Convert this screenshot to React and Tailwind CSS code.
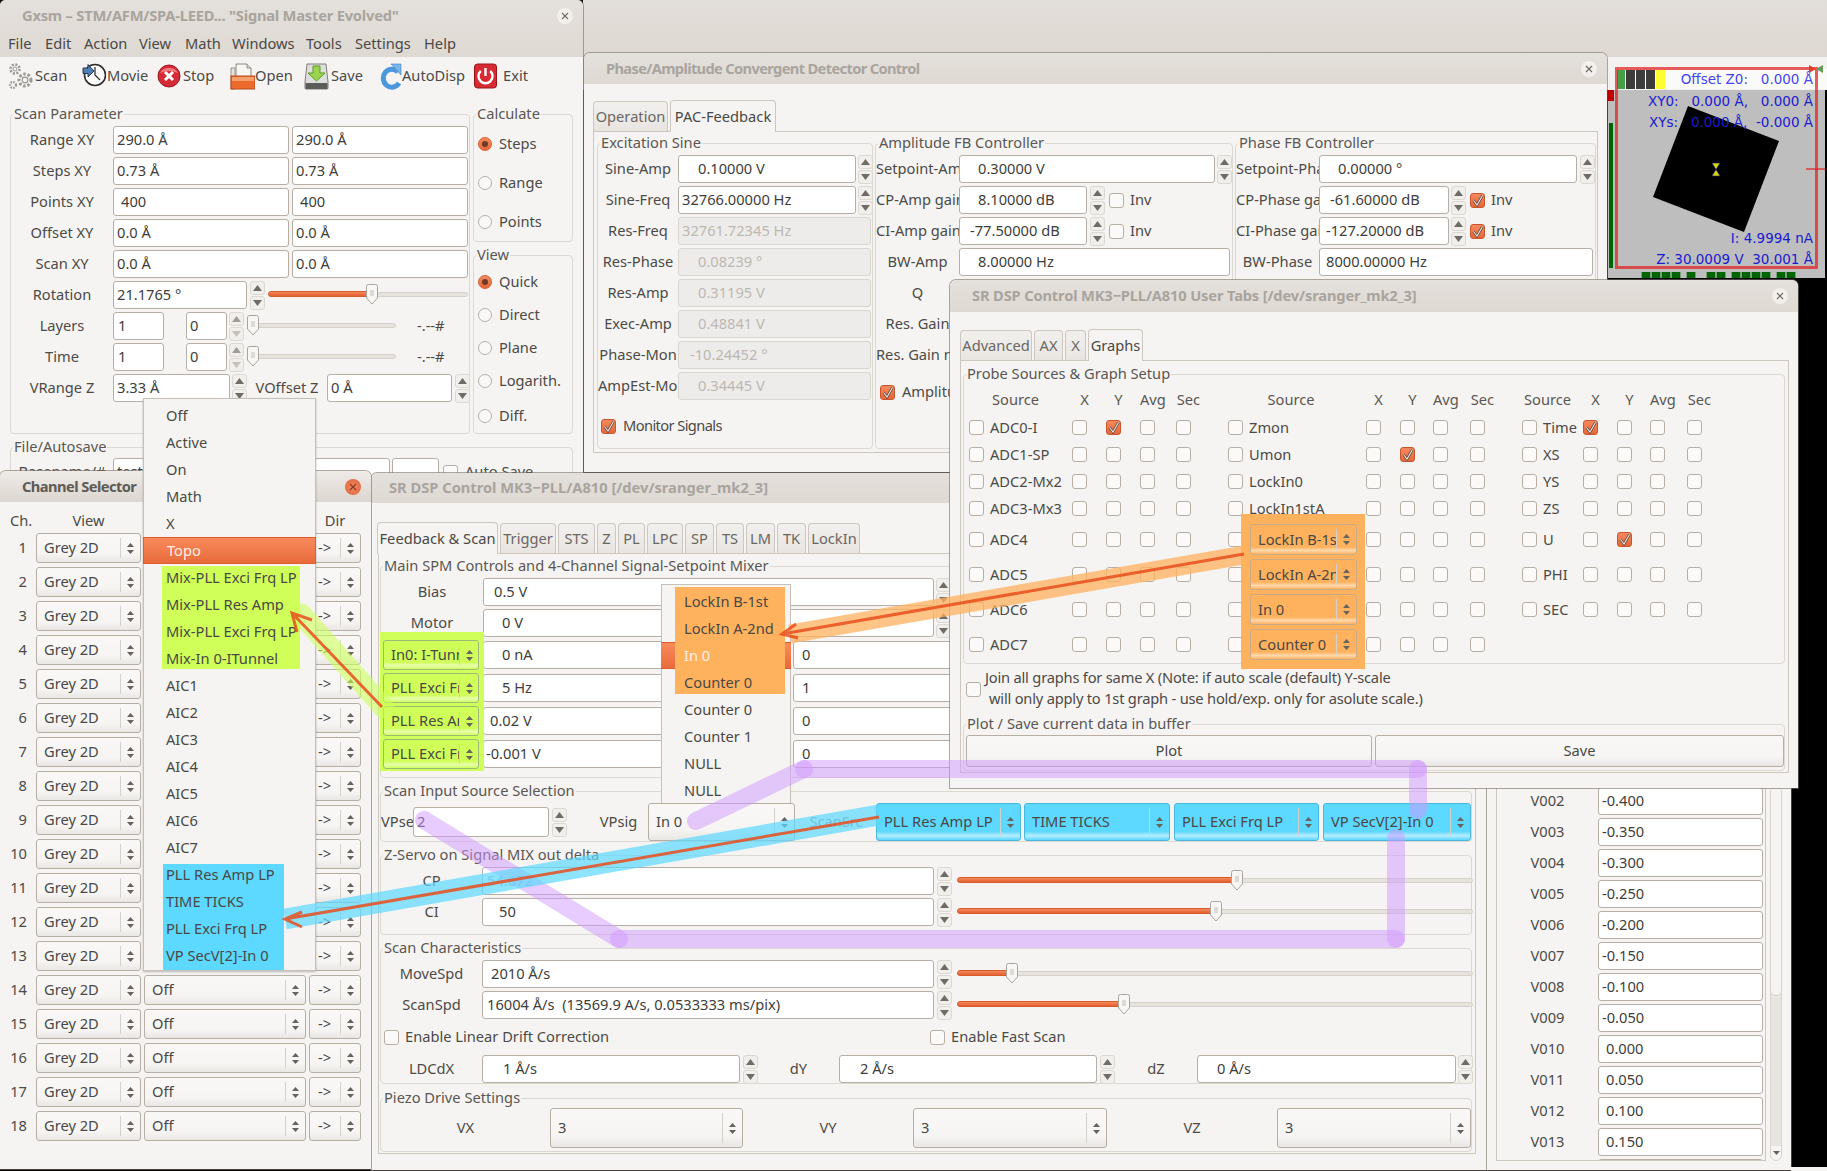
import React from 'react';

const Tri = ({ dir = 'up', c = '#6f6b66' }) => (
  <svg width="9" height="6" viewBox="0 0 9 6"><polygon points={dir === 'up' ? '4.5,0 9,6 0,6' : '0,0 9,0 4.5,6'} fill={c} /></svg>
);

const Spin = ({ className = '', dim }) => (
  <div className={`flex flex-col gap-[1px] w-[15px] shrink-0 ${className}`}>
    {['up', 'down'].map((d) => (
      <div key={d} className="h-[14px] rounded-[3px] border border-[#dcd8d2] bg-[#f1efec] flex items-center justify-center">
        <Tri dir={d} c={dim && d === 'down' ? '#c4c0ba' : dim ? '#a09c96' : '#6f6b66'} />
      </div>
    ))}
  </div>
);

const Inp = ({ v, className = '' }) => (
  <div className={`h-[28px] pb-[2px] shrink-0 flex items-center rounded-[3px] border border-[#b7afa6] bg-white text-[#403e3b] whitespace-nowrap overflow-hidden ${className}`}>{v}</div>
);

const Dis = ({ v, className = '' }) => (
  <div className={`h-[28px] pb-[2px] shrink-0 flex items-center rounded-[3px] border border-[#dad6d0] bg-[#eeecea] text-[#bcb8b2] whitespace-nowrap overflow-hidden ${className}`}>{v}</div>
);

const TONES = {
  plain: 'border-[#b7afa6] bg-[linear-gradient(180deg,#f9f8f7_0%,#f6f5f3_70%,#e9e7e4_100%)]',
  lime: 'border-[#9fb87a] bg-[linear-gradient(180deg,#d0ff5a_0%,#d0ff5a_76%,#e6ffb0_88%,#d0ff5a_100%)]',
  orange: 'border-[#c9ab8a] bg-[linear-gradient(180deg,#ffb25e_0%,#ffb25e_76%,#ffd9ac_88%,#ffb25e_100%)]',
  blue: 'border-[#49b8df] bg-[linear-gradient(180deg,#5dd8ff_0%,#5dd8ff_76%,#b4eeff_88%,#5dd8ff_100%)]',
};

const Combo = ({ t, className = '', tone = 'plain', pad = 'pl-[7px]', arrow = 'w-[19px]' }) => (
  <div className={`flex items-center shrink-0 rounded-[3px] border text-[#4a4845] ${TONES[tone]} ${className}`}>
    <span className={`flex-1 min-w-0 overflow-hidden whitespace-nowrap pb-[2px] ${pad}`}>{t}</span>
    <span className="w-px self-stretch my-[4px] bg-[#d4d0ca]" />
    <span className={`flex flex-col items-center gap-[3px] ${arrow}`}>
      <svg width="7" height="4" viewBox="0 0 7 4"><polygon points="3.5,0 7,4 0,4" fill="#66625d" /></svg>
      <svg width="7" height="4" viewBox="0 0 7 4"><polygon points="0,0 7,0 3.5,4" fill="#66625d" /></svg>
    </span>
  </div>
);

const Lbl = ({ t, className = '', start }) => (
  <div className={`shrink-0 flex items-center pb-[2px] overflow-hidden whitespace-nowrap text-[#4c4a47] ${start ? 'justify-start' : 'justify-center'} ${className}`}>{t}</div>
);

const Frame = ({ label, className = '', children }) => (
  <fieldset className={`min-w-0 shrink-0 border border-[#dcd8d2] rounded-[4px] ${className}`}>
    <legend className="ml-[2px] px-[1px] h-[20px] leading-[19px] text-[#5a5753] whitespace-nowrap">{label}</legend>
    {children}
  </fieldset>
);

const Chk = ({ on, className = '' }) => (
  <span className={`inline-flex w-[15px] h-[15px] shrink-0 rounded-[3px] border items-center justify-center ${on ? 'border-[#c8552b] bg-[linear-gradient(180deg,#f58a5e,#e5673a)]' : 'border-[#b7afa6] bg-[#fbfaf9]'} ${className}`}>
    {on && (
      <svg width="13" height="13" viewBox="0 0 13 13">
        <path d="M2.5 6.5 L6 11 L11.5 1.5" fill="none" stroke="#5a4a42" strokeWidth="2.6" />
        <path d="M2.5 6.5 L6 11 L11.5 1.5" fill="none" stroke="#f7e7df" strokeWidth="1.1" />
      </svg>
    )}
  </span>
);

const Radio = ({ on, t, className = '' }) => (
  <div className={`flex items-center pl-[4px] gap-[7px] text-[#4c4a47] ${className}`}>
    <span className={`w-[14px] h-[14px] rounded-full border flex items-center justify-center ${on ? 'border-[#d8602f] bg-[linear-gradient(180deg,#f58a5e,#e5673a)]' : 'border-[#b7afa6] bg-[#f9f8f7]'}`}>
      {on && <span className="w-[6px] h-[6px] rounded-full bg-[#6e3a22]" />}
    </span>
    <span className="pb-[2px]">{t}</span>
  </div>
);

const Slider = ({ className = '', pos, fill = true }) => (
  <div className={`relative h-[20px] mb-[2px] shrink-0 flex items-center ${className}`}>
    <div className="w-full h-[5px] rounded-[3px] bg-[#e6e3de] border border-[#d6d1ca]" />
    {fill && <div className="absolute left-0 top-[7px] h-[6px] rounded-[3px] bg-[linear-gradient(180deg,#f58a5e,#e2602f)] border border-[#d95b2a]" style={{ width: pos }} />}
    <svg className="absolute top-0" style={{ left: pos - 6 }} width="12" height="21" viewBox="0 0 12 21">
      <path d="M2.5 0.5 H9.5 Q11.5 0.5 11.5 2.5 V14 L6 20 L0.5 14 V2.5 Q0.5 0.5 2.5 0.5 Z" fill="#f7f6f4" stroke="#aaa49c" />
      <path d="M4 7 H8 M4 9 H8 M4 11 H8" stroke="#c2bdb6" />
    </svg>
  </div>
);

const Close = ({ active }) => (
  <span className={`w-[16px] h-[16px] rounded-full flex items-center justify-center ${active ? 'bg-[radial-gradient(circle,#f08a62,#e0613a)]' : 'bg-[#f2efec]'}`}>
    <svg width="8" height="8" viewBox="0 0 8 8"><path d="M1 1 L7 7 M7 1 L1 7" stroke={active ? '#8a3a20' : '#6c6862'} strokeWidth="1.1" /></svg>
  </span>
);

const Win = ({ title, className = '', active, pl = 'pl-[22px]', bar, children, titleH = 'h-[31px]', tr = '' }) => (
  <div className={`absolute isolate flex flex-col rounded-t-[6px] bg-[#f5f4f2] shadow-[0_0_0_1px_rgba(120,110,100,0.6)] ${className}`}>
    <div className={`shrink-0 rounded-t-[6px] ${active ? 'bg-[linear-gradient(180deg,#efebe7,#dcd6d0)]' : 'bg-[linear-gradient(180deg,#e4e0db,#dfd9d3)]'}`}>
      <div className={`flex items-center justify-between pr-[10px] ${pl} ${titleH}`}>
        <span className={`font-bold whitespace-nowrap pb-[2px] ${tr} ${active ? 'text-[#5e5a55]' : 'text-[#a9a49e]'}`}>{title}</span>
        <Close active={active} />
      </div>
      {bar}
    </div>
    {children}
  </div>
);

const Tab = ({ t, className = '', active }) => (
  <div className={`flex items-center justify-center pb-[2px] whitespace-nowrap rounded-t-[4px] border border-b-0 border-[#cdc7bf] shrink-0 ${active ? 'h-[32px] bg-[#f5f4f2] text-[#4a4845] -mb-px relative' : 'h-[30px] bg-[linear-gradient(180deg,#f2f0ee,#e8e5e1)] text-[#6a6762]'} ${className}`}>{t}</div>
);

const MENU = [['File', 'w-[37px]'], ['Edit', 'w-[39px]'], ['Action', 'w-[55px]'], ['View', 'w-[46px]'], ['Math', 'w-[47px]'], ['Windows', 'w-[74px]'], ['Tools', 'w-[49px]'], ['Settings', 'w-[69px]'], ['Help', 'w-[40px]']];

const Gear = () => (
  <svg width="26" height="28" viewBox="0 0 26 28">
    <g fill="none" stroke="#9b9a95">
      <circle cx="7" cy="7" r="4.5" strokeWidth="2.6" strokeDasharray="2 1.5" />
      <circle cx="7" cy="7" r="2" strokeWidth="1" />
      <circle cx="17" cy="18" r="6" strokeWidth="3" strokeDasharray="2.5 1.8" />
      <circle cx="17" cy="18" r="2.8" strokeWidth="1.2" />
      <circle cx="5" cy="23" r="3" strokeWidth="2.2" strokeDasharray="1.6 1.2" />
    </g>
  </svg>
);
const Clock = () => (
  <svg width="24" height="28" viewBox="0 0 24 28">
    <circle cx="13" cy="13" r="10.5" fill="#fdfdfd" stroke="#2b2b2b" strokeWidth="1.6" />
    <path d="M13 5 V13 L18 18" fill="none" stroke="#333" strokeWidth="1.3" />
    <path d="M1 6 H6 V2.5 L12 9 L6 15 V11.5 H1 Z" fill="#4f7fb8" stroke="#1f2a44" strokeWidth="0.9" />
  </svg>
);
const StopI = () => (
  <svg width="24" height="26" viewBox="0 0 24 26">
    <circle cx="12" cy="13" r="11" fill="#d52b36" stroke="#9c1622" />
    <path d="M3 10 A10 9 0 0 1 21 10 Q12 6 3 10Z" fill="#ee7d80" />
    <path d="M8 9 L16 17 M16 9 L8 17" stroke="#fff" strokeWidth="3" />
  </svg>
);
const OpenI = () => (
  <svg width="25" height="27" viewBox="0 0 25 27">
    <path d="M6 1 H17 L21 5 V14 H6 Z" fill="#f6f5f2" stroke="#8a8a86" />
    <path d="M17 1 V5 H21" fill="#ddd" stroke="#8a8a86" />
    <path d="M1 5 H5 V26 H1 Z" fill="#e7e3dc" stroke="#9a968e" />
    <rect x="1" y="13" width="24" height="13" fill="#ec6a2c" stroke="#b84d1b" />
    <rect x="2" y="14" width="22" height="4" fill="#f5a06c" />
  </svg>
);
const SaveI = () => (
  <svg width="25" height="27" viewBox="0 0 25 27">
    <path d="M3 1 H22 L24 19 V25 Q24 26 23 26 H2 Q1 26 1 25 V19 Z" fill="#dedede" stroke="#7e7e7a" />
    <rect x="1.5" y="20" width="22" height="6" fill="#5c5c58" />
    <path d="M9 3 H16 V10 H21 L12.5 18 L4 10 H9 Z" fill="#9bd44e" stroke="#5e9a22" />
  </svg>
);
const AutoI = () => (
  <svg width="22" height="27" viewBox="0 0 22 27">
    <path d="M18 9 A8.5 9 0 1 0 19 20" fill="none" stroke="#4d97dc" strokeWidth="5" />
    <path d="M11 1 L21 1 L21 12 Z" fill="#7ab6ea" stroke="#3f82c2" strokeWidth="0.6" />
  </svg>
);
const ExitI = () => (
  <svg width="23" height="26" viewBox="0 0 23 26">
    <rect x="0.5" y="1" width="22" height="24" rx="3" fill="#d82a33" stroke="#9a141c" />
    <path d="M6.8 8 A7 7 0 1 0 16.2 8" fill="none" stroke="#fff" strokeWidth="2.4" />
    <path d="M11.5 5 V13" stroke="#fff" strokeWidth="2.4" />
  </svg>
);

const TOOLS = [
  ['Scan', <Gear />, 'w-[74px]', 'w-[27px]'],
  ['Movie', <Clock />, 'w-[75px]', 'w-[25px]'],
  ['Stop', <StopI />, 'w-[73px]', 'w-[26px]'],
  ['Open', <OpenI />, 'w-[74px]', 'w-[25px]'],
  ['Save', <SaveI />, 'w-[76px]', 'w-[27px]'],
  ['AutoDisp', <AutoI />, 'w-[94px]', 'w-[22px]'],
  ['Exit', <ExitI />, 'w-[60px]', 'w-[29px]'],
];

const XY = [
  ['Range XY', '290.0 Å', 'pl-[3px]'],
  ['Steps XY', '0.73 Å', 'pl-[3px]'],
  ['Points XY', '400', 'pl-[7px]'],
  ['Offset XY', '0.0 Å', 'pl-[3px]'],
  ['Scan XY', '0.0 Å', 'pl-[3px]'],
];

const Gxsm = () => (
  <Win
    title={'Gxsm – STM/AFM/SPA-LEED... "Signal Master Evolved"'}
    tr="tracking-[-0.2px]"
    className="left-0 top-0 w-[583px] h-[500px]"
    bar={
      <div className="flex items-center h-[26px] pl-[8px] pb-[2px] text-[#4a4845]">
        {MENU.map(([m, w]) => <span key={m} className={w}>{m}</span>)}
      </div>
    }
  >
    <div className="flex items-center h-[38px] pl-[8px] text-[#4c4a47]">
      {TOOLS.map(([t, ic, w, iw]) => (
        <div key={t} className={`flex items-center shrink-0 ${w}`}>
          <span className={`flex shrink-0 ${iw}`}>{ic}</span><span className="pb-[2px]">{t}</span>
        </div>
      ))}
    </div>
    <div className="flex flex-col px-[10px] pt-[9px]">
      <div className="flex gap-[3px]">
        <Frame label="Scan Parameter" className="w-[460px] h-[330px]">
          <div className="flex flex-col gap-[3px] pt-[2px]">
            {XY.map(([l, v, p]) => (
              <div key={l} className="flex items-center">
                <Lbl t={l} className="w-[102px] h-[28px]" />
                <Inp v={v} className={`w-[176px] ${p}`} />
                <Inp v={v} className={`w-[176px] ml-[3px] ${p}`} />
              </div>
            ))}
            <div className="flex items-center h-[28px]">
              <Lbl t="Rotation" className="w-[102px] h-[28px]" />
              <Inp v="21.1765 °" className="w-[134px] pl-[3px]" />
              <Spin className="ml-[3px]" />
              <Slider className="w-[200px] ml-[3px]" pos={104} />
            </div>
            {['Layers', 'Time'].map((l) => (
              <div key={l} className="flex items-center h-[28px]">
                <Lbl t={l} className="w-[102px] h-[28px]" />
                <Inp v="1" className="w-[51px] pl-[4px]" />
                <Inp v="0" className="w-[41px] ml-[22px] pl-[3px]" />
                <Spin className="ml-[2px]" dim />
                <Slider className="w-[148px] ml-[4px]" pos={5} fill={false} />
                <span className="ml-[21px] pb-[2px] text-[#4c4a47]">-.--#</span>
              </div>
            ))}
            <div className="flex items-center h-[28px]">
              <Lbl t="VRange Z" className="w-[102px] h-[28px]" />
              <Inp v="3.33 Å" className="w-[117px] pl-[3px]" />
              <Spin className="ml-[2px]" />
              <Lbl t="VOffset Z" className="w-[80px] h-[28px]" />
              <Inp v="0 Å" className="w-[125px] pl-[3px]" />
              <Spin className="ml-[3px]" />
            </div>
          </div>
        </Frame>
        <div className="flex flex-col gap-[3px] w-[100px]">
          <Frame label="Calculate" className="w-[100px] h-[138px]">
            <Radio on t="Steps" className="h-[39px]" />
            <Radio t="Range" className="h-[39px]" />
            <Radio t="Points" className="h-[39px]" />
          </Frame>
          <Frame label="View" className="w-[100px] h-[189px]">
            <Radio on t="Quick" className="h-[33px]" />
            <Radio t="Direct" className="h-[33px]" />
            <Radio t="Plane" className="h-[33px]" />
            <Radio t="Logarith." className="h-[33px]" />
            <Radio t="Diff." className="h-[34px] mt-[2px]" />
          </Frame>
        </div>
      </div>
      <Frame label="File/Autosave" className="w-[563px] h-[60px] mt-[3px]">
        <div className="flex items-center pt-[1px]">
          <Lbl t="Basename/#" className="w-[102px] h-[28px]" />
          <Inp v="test" className="w-[277px] pl-[3px]" />
          <Inp v="" className="w-[47px] ml-[2px]" />
          <Chk className="ml-[4px]" />
          <span className="ml-[7px] pb-[2px] text-[#4c4a47]">Auto Save</span>
        </div>
      </Frame>
    </div>
  </Win>
);

const Row = ({ className = '', children }) => <div className={`flex items-center h-[28px] ${className}`}>{children}</div>;

const Phase = () => (
  <Win title="Phase/Amplitude Convergent Detector Control" tr="tracking-[-0.65px]" className="left-[584px] top-[53px] w-[1023px] h-[419px]">
    <div className="flex items-end gap-[2px] pl-[9px] pt-[16px]">
      <Tab t="Operation" className="w-[75px]" />
      <Tab t="PAC-Feedback" active className="w-[106px]" />
    </div>
    <div className="ml-[9px] w-[1005px] h-[322px] border border-[#cdc7bf] flex gap-[2px] pl-[3px] pt-[1px]">
      <Frame label="Excitation Sine" className="w-[276px] h-[316px]">
        <div className="flex flex-col gap-[3px] pt-[2px]">
          <Row><Lbl t="Sine-Amp" className="w-[80px] h-[28px]" /><Inp v="0.10000 V" className="w-[178px] pl-[19px]" /><Spin className="ml-[2px]" /></Row>
          <Row><Lbl t="Sine-Freq" className="w-[80px] h-[28px]" /><Inp v="32766.00000 Hz" className="w-[178px] pl-[3px]" /><Spin className="ml-[2px]" /></Row>
          {[['Res-Freq', '32761.72345 Hz', 'pl-[3px]'], ['Res-Phase', '0.08239 °', 'pl-[19px]'], ['Res-Amp', '0.31195 V', 'pl-[19px]'], ['Exec-Amp', '0.48841 V', 'pl-[19px]'], ['Phase-Mon', '-10.24452 °', 'pl-[11px]'], ['AmpEst-Mon', '0.34445 V', 'pl-[19px]']].map(([l, v, p]) => (
            <Row key={l}><Lbl t={l} className="w-[80px] h-[28px]" start={l === 'AmpEst-Mon'} /><Dis v={v} className={`w-[193px] ${p}`} /></Row>
          ))}
          <div className="flex items-center gap-[7px] h-[20px] mt-[13px] pl-[3px] text-[#4c4a47]"><Chk on /><span className="pb-[2px] tracking-[-0.6px]">Monitor Signals</span></div>
        </div>
      </Frame>
      <Frame label="Amplitude FB Controller" className="w-[358px] h-[316px]">
        <div className="flex flex-col gap-[3px] pt-[2px]">
          <Row><Lbl t="Setpoint-Amp" start className="w-[83px] h-[28px]" /><Inp v="0.30000 V" className="w-[256px] pl-[18px]" /><Spin className="ml-[2px]" /></Row>
          <Row><Lbl t="CP-Amp gain" start className="w-[83px] h-[28px]" /><Inp v="8.10000 dB" className="w-[128px] pl-[18px]" /><Spin className="ml-[3px]" /><Chk className="ml-[4px]" /><span className="ml-[6px] pb-[2px] text-[#4c4a47]">Inv</span></Row>
          <Row><Lbl t="CI-Amp gain" start className="w-[83px] h-[28px]" /><Inp v="-77.50000 dB" className="w-[128px] pl-[10px]" /><Spin className="ml-[3px]" /><Chk className="ml-[4px]" /><span className="ml-[6px] pb-[2px] text-[#4c4a47]">Inv</span></Row>
          <Row><Lbl t="BW-Amp" className="w-[83px] h-[28px]" /><Inp v="8.00000 Hz" className="w-[271px] pl-[18px]" /></Row>
          <Row><Lbl t="Q" className="w-[83px] h-[28px]" /></Row>
          <Row><Lbl t="Res. Gain" className="w-[83px] h-[28px]" /></Row>
          <Row><Lbl t="Res. Gain n" start className="w-[83px] h-[28px]" /></Row>
          <div className="flex items-center gap-[7px] h-[20px] mt-[10px] pl-[4px] text-[#4c4a47]"><Chk on /><span className="pb-[2px]">Amplitude</span></div>
        </div>
      </Frame>
      <Frame label="Phase FB Controller" className="w-[361px] h-[316px]">
        <div className="flex flex-col gap-[3px] pt-[2px]">
          <Row><Lbl t="Setpoint-Phase" start className="w-[83px] h-[28px]" /><Inp v="0.00000 °" className="w-[258px] pl-[18px]" /><Spin className="ml-[3px]" /></Row>
          <Row><Lbl t="CP-Phase gain" start className="w-[83px] h-[28px]" /><Inp v="-61.60000 dB" className="w-[130px] pl-[10px]" /><Spin className="ml-[2px]" /><Chk on className="ml-[4px]" /><span className="ml-[6px] pb-[2px] text-[#4c4a47]">Inv</span></Row>
          <Row><Lbl t="CI-Phase gain" start className="w-[83px] h-[28px]" /><Inp v="-127.20000 dB" className="w-[130px] pl-[6px]" /><Spin className="ml-[2px]" /><Chk on className="ml-[4px]" /><span className="ml-[6px] pb-[2px] text-[#4c4a47]">Inv</span></Row>
          <Row><Lbl t="BW-Phase" className="w-[83px] h-[28px]" /><Inp v="8000.00000 Hz" className="w-[274px] pl-[6px]" /></Row>
        </div>
      </Frame>
    </div>
  </Win>
);

const ImageWin = () => {
  const leds = [305, 335, 365, 395, 440, 500, 530, 575, 605, 635, 665, 710, 740];
  return (
    <div className="absolute left-[583px] top-0 w-[1244px] h-[290px] flex flex-col bg-black">
      <div className="h-[57px] shrink-0 bg-[linear-gradient(180deg,#e2ded9,#dfd8d2)]" />
      <div className="h-[33px] shrink-0 bg-[#f3f2f0] pt-[12px]">
        <div className="ml-[1034px] h-[20px] flex items-center bg-[#fafaf9] pr-[14px]">
          <span className="w-[8px] h-[19px] bg-[#43a047]" />
          <span className="w-[9px] h-[19px] ml-[1px] bg-[#3c3c3c]" />
          <span className="w-[9px] h-[19px] ml-[1px] bg-[#3c3c3c]" />
          <span className="w-[9px] h-[19px] ml-[1px] bg-[#3c3c3c]" />
          <span className="w-[9px] h-[19px] ml-[1px] bg-[#ffff33]" />
          <span className="flex-1 text-right whitespace-pre text-[#4444ee] text-[13.5px] font-['DejaVu_Sans',sans-serif]">Offset Z0:   0.000 Å</span>
        </div>
      </div>
      <div className="relative ml-[1025px] w-[217px] h-[188px] shrink-0 bg-[#bebebe] flex flex-col justify-between items-end pr-[12px] pt-[1px] pb-[8px] text-[#1a1ad0] text-[13.5px] font-['DejaVu_Sans',sans-serif]">
        <svg className="absolute left-0 top-0" width="217" height="188" viewBox="0 0 217 188">
          <rect x="0" y="0" width="6" height="11" fill="#c00000" />
          <rect x="1" y="33" width="4" height="145" fill="#006400" />
          {leds.map((x) => <rect key={x} x={x / 3 - 68} y="182" width="8.7" height="6" fill="#006400" />)}
          <polygon points="80,16 171,51 136,142 45,107" fill="#000" />
          <polygon points="104,73 112,73 108,79.5 112,86 104,86 108,79.5" fill="#d8d800" stroke="#2020a0" strokeWidth="0.6" />
        </svg>
        <div className="relative flex flex-col items-end whitespace-pre leading-[21px]">
          <span>XY0:   0.000 Å,   0.000 Å</span>
          <span>XYs:   0.000 Å,  -0.000 Å</span>
        </div>
        <div className="relative flex flex-col items-end whitespace-pre leading-[21px]">
          <span>I: 4.9994 nA</span>
          <span>Z: 30.0009 V  30.001 Å</span>
        </div>
      </div>
    </div>
  );
};

const TABS = [['Trigger', 'w-[56px]'], ['STS', 'w-[37px]'], ['Z', 'w-[19px]'], ['PL', 'w-[27px]'], ['LPC', 'w-[36px]'], ['SP', 'w-[29px]'], ['TS', 'w-[28px]'], ['LM', 'w-[29px]'], ['TK', 'w-[29px]'], ['LockIn', 'w-[52px]']];

const MIX = [
  ['In0: I-Tunnel', '0 nA', 'pl-[18px]', '0'],
  ['PLL Exci Frq', '5 Hz', 'pl-[18px]', '1'],
  ['PLL Res Amp', '0.02 V', 'pl-[6px]', '0'],
  ['PLL Exci Frq', '-0.001 V', 'pl-[2px]', '0'],
];

const SrDsp = () => (
  <Win title="SR DSP Control MK3−PLL/A810 [/dev/sranger_mk2_3]" pl="pl-[18px]" className="left-[371px] top-[473px] w-[1116px] h-[697px]" titleH="h-[30px]">
    <div className="absolute left-[9px] top-[159px] w-[104px] h-[139px] bg-[#d0ff5a] z-[1]" />
    <div className="flex items-end gap-[2px] pl-[6px] pt-[19px]">
      <Tab t="Feedback & Scan" active className="w-[121px]" />
      {TABS.map(([t, w]) => <Tab key={t} t={t} className={w} />)}
    </div>
    <div className="ml-[7px] w-[1098px] h-[601px] border border-[#cdc7bf] flex flex-col pl-[1px] pt-[2px]">
      <Frame label="Main SPM Controls and 4-Channel Signal-Setpoint Mixer" className="w-[1092px] h-[222px]">
        <div className="flex flex-col pt-[2px]">
          <Row><Lbl t="Bias" className="w-[102px] h-[28px]" /><Inp v="0.5 V" className="w-[451px] pl-[10px]" /><Spin className="ml-[2px]" /></Row>
          <Row className="mt-[3px]"><Lbl t="Motor" className="w-[102px] h-[28px]" /><Inp v="0 V" className="w-[451px] pl-[18px]" /><Spin className="ml-[2px]" /></Row>
          <div className="flex flex-col gap-[5px] mt-[4px]">
            {MIX.map(([c, v, p, r], i) => (
              <Row key={i}>
                <Combo t={c} tone="lime" className="w-[96px] h-[30px] ml-[2px] relative z-[2]" arrow="w-[18px]" />
                <Inp v={v} className={`w-[200px] ml-[4px] ${p}`} />
                <Inp v={r} className="w-[200px] ml-[110px] pl-[8px]" />
              </Row>
            ))}
          </div>
        </div>
      </Frame>
      <Frame label="Scan Input Source Selection" className="w-[1092px] h-[61px] mt-[3px]">
        <div className="flex items-center h-[38px] pt-0 mt-[2px]">
          <Lbl t="VPse" start className="w-[32px] h-[28px]" />
          <Inp v="2" className="w-[136px] !h-[30px] pl-[3px] " />
          <Spin className="ml-[3px]" />
          <Lbl t="VPsig" className="w-[59px] h-[28px] ml-[22px]" />
          <Combo t="In 0" className="w-[147px] h-[38px]" />
          <Lbl t="ScanSrc" className="w-[80px] h-[28px] ml-[1px] opacity-60" />
          <Combo t="PLL Res Amp LP" tone="blue" className="w-[145px] h-[38px]" />
          <Combo t="TIME TICKS" tone="blue" className="w-[146px] h-[38px] ml-[3px]" />
          <Combo t="PLL Exci Frq LP" tone="blue" className="w-[145px] h-[38px] ml-[4px]" />
          <Combo t="VP SecV[2]-In 0" tone="blue" className="w-[148px] h-[38px] ml-[4px]" />
        </div>
      </Frame>
      <Frame label="Z-Servo  on Signal MIX out delta" className="w-[1092px] h-[90px] mt-[3px]">
        <div className="flex flex-col gap-[3px] pt-[2px]">
          <Row><Lbl t="CP" className="w-[101px] h-[28px]" /><Inp v="54.672" className="w-[452px] pl-[4px] !text-[#9ab4c0]" /><Spin className="ml-[3px]" /><Slider className="w-[516px] ml-[5px]" pos={280} /></Row>
          <Row><Lbl t="CI" className="w-[101px] h-[28px]" /><Inp v="50" className="w-[452px] pl-[16px]" /><Spin className="ml-[3px]" /><Slider className="w-[516px] ml-[5px]" pos={259} /></Row>
        </div>
      </Frame>
      <Frame label="Scan Characteristics" className="w-[1092px] h-[146px] mt-[3px]">
        <div className="flex flex-col pt-[2px]">
          <Row><Lbl t="MoveSpd" className="w-[101px] h-[28px]" /><Inp v="2010 Å/s" className="w-[452px] pl-[8px]" /><Spin className="ml-[3px]" /><Slider className="w-[516px] ml-[5px]" pos={55} /></Row>
          <Row className="mt-[3px]"><Lbl t="ScanSpd" className="w-[101px] h-[28px]" /><Inp v="16004 Å/s  (13569.9 A/s, 0.0533333 ms/pix)" className="w-[452px] pl-[4px] whitespace-pre" /><Spin className="ml-[3px]" /><Slider className="w-[516px] ml-[5px]" pos={167} /></Row>
          <div className="flex items-center h-[20px] mt-[8px] text-[#4c4a47]">
            <div className="flex items-center gap-[6px] w-[549px] pl-[3px]"><Chk /><span className="pb-[2px]">Enable Linear Drift Correction</span></div>
            <div className="flex items-center gap-[6px]"><Chk /><span className="pb-[2px]">Enable Fast Scan</span></div>
          </div>
          <Row className="mt-[8px]">
            <Lbl t="LDCdX" className="w-[101px] h-[28px]" />
            <Inp v="1 Å/s" className="w-[258px] pl-[20px]" /><Spin className="ml-[3px]" />
            <Lbl t="dY" className="w-[81px] h-[28px]" />
            <Inp v="2 Å/s" className="w-[258px] pl-[20px]" /><Spin className="ml-[3px]" />
            <Lbl t="dZ" className="w-[82px] h-[28px]" />
            <Inp v="0 Å/s" className="w-[259px] pl-[19px]" /><Spin className="ml-[2px]" />
          </Row>
        </div>
      </Frame>
      <Frame label="Piezo Drive Settings" className="w-[1092px] h-[64px] mt-[4px]">
        <div className="flex items-center h-[40px]">
          <Lbl t="VX" className="w-[169px] h-[28px]" /><Combo t="3" className="w-[193px] h-[40px]" />
          <Lbl t="VY" className="w-[170px] h-[28px]" /><Combo t="3" className="w-[194px] h-[40px]" />
          <Lbl t="VZ" className="w-[170px] h-[28px]" /><Combo t="3" className="w-[194px] h-[40px]" />
        </div>
      </Frame>
    </div>
  </Win>
);

const VWin = () => {
  const rows = Array.from({ length: 13 }, (_, k) => {
    const i = k + 2;
    const val = (-0.5 + i * 0.05).toFixed(3);
    return ['V' + String(i).padStart(3, '0'), val];
  });
  return (
    <div className="absolute isolate left-[1487px] top-[780px] w-[304px] h-[390px] flex bg-[#f5f4f2] shadow-[0_0_0_1px_rgba(120,110,100,0.6)] pl-[9px] pt-[6px]">
      <div className="w-[270px] h-[375px] border border-[#cdc7bf] overflow-hidden flex flex-col gap-[3px] shrink-0">
        {rows.map(([l, v]) => (
          <Row key={l} className="shrink-0">
            <Lbl t={l} className="w-[101px] h-[28px]" />
            <Inp v={v} className={`w-[165px] ${v[0] === '-' ? 'pl-[3px]' : 'pl-[7px]'}`} />
          </Row>
        ))}
      </div>
      <div className="ml-[4px] w-[12px] h-[375px] rounded-[6px] border border-[#d8d4ce] bg-[#e8e5e1] flex flex-col justify-between overflow-hidden">
        <div className="h-[209px] rounded-b-[6px] bg-[#f5f4f2] border-b border-[#d0ccc5]" />
        <div className="h-[14px] bg-[#f5f4f2] flex items-center justify-center"><svg width="7" height="4" viewBox="0 0 7 4"><polygon points="0,0 7,0 3.5,4" fill="#66625d" /></svg></div>
      </div>
    </div>
  );
};

const HCell = ({ t }) => <span className="w-[25px] text-center text-[#5a5753] pb-[2px]">{t}</span>;
const G = [
  ['ADC0-I', 'Zmon', 'Time', [1], [], [0]],
  ['ADC1-SP', 'Umon', 'XS', [], [1], []],
  ['ADC2-Mx2', 'LockIn0', 'YS', [], [], []],
  ['ADC3-Mx3', 'LockIn1stA', 'ZS', [], [], []],
  ['ADC4', null, 'U', [], [], [1]],
  ['ADC5', null, 'PHI', [], [], []],
  ['ADC6', null, 'SEC', [], [], []],
  ['ADC7', null, null, [], [], []],
];
const COMBOS = ['LockIn B-1st', 'LockIn A-2nd', 'In 0', 'Counter 0'];

const Cells = ({ on = [] }) => [0, 1, 2, 3].map((i) => (
  <div key={i} className="flex items-center"><Chk on={on.includes(i)} /></div>
));

const UserTabs = () => {
  let ci = 0;
  return (
    <Win title="SR DSP Control MK3−PLL/A810 User Tabs [/dev/sranger_mk2_3]" tr="tracking-[-0.15px]" className="left-[950px] top-[280px] w-[848px] h-[508px]" titleH="h-[32px]">
      <div className="absolute left-[291px] top-[234px] w-[124px] h-[155px] bg-[#ffb25e] z-[1]" />
      <div className="flex items-end gap-[2px] pl-[10px] pt-[17px]">
        <Tab t="Advanced" className="w-[72px]" />
        <Tab t="AX" className="w-[29px]" />
        <Tab t="X" className="w-[21px]" />
        <Tab t="Graphs" active className="w-[55px]" />
      </div>
      <div className="ml-[10px] w-[829px] h-[413px] border border-[#cdc7bf] pl-[2px] pt-[3px]">
        <Frame label="Probe Sources & Graph Setup" className="w-[822px] h-[300px]">
          <div className="pt-[2px] pl-[5px] grid grid-cols-[21px_82px_34px_34px_36px_52px_21px_117px_34px_33px_37px_52px_21px_40px_34px_33px_37px_40px] grid-rows-[28px_27px_27px_27px_27px_35px_35px_35px_35px] text-[#4c4a47]">
            <div className="col-span-2 flex items-center justify-center pr-[10px] pb-[2px] text-[#5a5753]">Source</div>
            {['X', 'Y', 'Avg', 'Sec'].map((h) => <div key={h} className="flex items-center"><HCell t={h} /></div>)}
            <div className="col-span-2 flex items-center justify-center pr-[12px] pb-[2px] text-[#5a5753]">Source</div>
            {['X', 'Y', 'Avg', 'Sec'].map((h) => <div key={h} className="flex items-center"><HCell t={h} /></div>)}
            <div className="col-span-2 flex items-center justify-center pr-[10px] pb-[2px] text-[#5a5753]">Source</div>
            {['X', 'Y', 'Avg', 'Sec'].map((h) => <div key={h} className="flex items-center"><HCell t={h} /></div>)}
            {G.map(([a, b, c, oa, ob, oc]) => (
              <React.Fragment key={a}>
                <div className="flex items-center"><Chk /></div>
                <div className="flex items-center pb-[2px]">{a}</div>
                <Cells on={oa} />
                <div className="flex items-center"><Chk /></div>
                <div className={`flex items-center ${b ? 'pb-[2px]' : ''}`}>
                  {b ?? <Combo t={COMBOS[ci++]} tone="orange" className="w-[107px] h-[31px] relative z-[2] ml-[1px]" arrow="w-[19px]" />}
                </div>
                <Cells on={ob} />
                {c ? (
                  <>
                    <div className="flex items-center"><Chk /></div>
                    <div className="flex items-center pb-[2px]">{c}</div>
                    <Cells on={oc} />
                  </>
                ) : <div className="col-span-6" />}
              </React.Fragment>
            ))}
          </div>
        </Frame>
        <div className="flex items-center h-[50px] pl-[3px] text-[#4c4a47]">
          <Chk />
          <div className="ml-[4px] flex flex-col leading-[21px] tracking-[-0.2px] pb-[2px]">
            <span>Join all graphs for same X (Note: if auto scale (default) Y-scale</span>
            <span className="ml-[4px]">will only apply to 1st graph - use hold/exp. only for asolute scale.)</span>
          </div>
        </div>
        <Frame label="Plot / Save current data in buffer" className="w-[822px] h-[57px]">
          <div className="flex gap-[3px] pl-[2px] pt-[1px]">
            <div className="w-[406px] h-[32px] pb-[2px] flex items-center justify-center rounded-[3px] border border-[#b7afa6] bg-[linear-gradient(180deg,#f9f8f7_0%,#f6f5f3_70%,#e9e7e4_100%)] text-[#4a4845]">Plot</div>
            <div className="w-[409px] h-[32px] pb-[2px] flex items-center justify-center rounded-[3px] border border-[#b7afa6] bg-[linear-gradient(180deg,#f9f8f7_0%,#f6f5f3_70%,#e9e7e4_100%)] text-[#4a4845]">Save</div>
          </div>
        </Frame>
      </div>
    </Win>
  );
};

const Channel = () => (
  <Win title="Channel Selector" tr="tracking-[-0.56px]" active className="left-0 top-[471px] w-[371px] h-[698px]">
    <div className="flex items-center h-[22px] mt-[8px] pb-[2px] text-[#4c4a47]">
      <span className="w-[36px] pl-[10px]">Ch.</span>
      <span className="w-[105px] text-center">View</span>
      <span className="w-[165px]" />
      <span className="w-[58px] text-center">Dir</span>
    </div>
    <div className="flex flex-col gap-[4px] mt-[1px]">
      {Array.from({ length: 18 }, (_, i) => i + 1).map((n) => (
        <div key={n} className="flex items-center h-[30px]">
          <span className="w-[27px] pb-[2px] text-right text-[#4c4a47]">{n}</span>
          <Combo t="Grey 2D" className="w-[105px] h-[30px] ml-[9px]" />
          <Combo t={n >= 14 ? 'Off' : ''} className="w-[162px] h-[30px] ml-[3px]" />
          <Combo t="->" className="w-[52px] h-[30px] ml-[3px]" pad="pl-[8px]" />
        </div>
      ))}
    </div>
  </Win>
);

const M1 = ['Off', 'Active', 'On', 'Math', 'X', 'Topo', 'Mix-PLL Exci Frq LP', 'Mix-PLL Res Amp', 'Mix-PLL Exci Frq LP', 'Mix-In 0-ITunnel', 'AIC1', 'AIC2', 'AIC3', 'AIC4', 'AIC5', 'AIC6', 'AIC7', 'PLL Res Amp LP', 'TIME TICKS', 'PLL Exci Frq LP', 'VP SecV[2]-In 0'];

const Menu1 = () => (
  <div className="absolute isolate left-[143px] top-[398px] w-[173px] h-[573px] bg-[#f5f4f2] border border-[#c6c0b8] shadow-[0_1px_2px_rgba(0,0,0,0.25)] flex flex-col pt-[3px]">
    <div className="absolute left-[18px] top-[167px] w-[138px] h-[103px] bg-[#d0ff5a]" />
    <div className="absolute left-[19px] top-[465px] w-[121px] h-[106px] bg-[#5dd8ff]" />
    {M1.map((t, i) => (
      <div key={i} className={`relative h-[27px] pb-[2px] shrink-0 flex items-center pl-[22px] whitespace-nowrap ${t === 'Topo' ? '-mx-px pl-[23px] bg-[linear-gradient(180deg,#f98a5c,#e86b3b)] border border-[#e35d2c] text-[#fdeee6]' : 'text-[#4a4845]'}`}>{t}</div>
    ))}
  </div>
);

const M2 = ['LockIn B-1st', 'LockIn A-2nd', 'In 0', 'Counter 0', 'Counter 0', 'Counter 1', 'NULL', 'NULL'];

const Menu2 = () => (
  <div className="absolute isolate left-[661px] top-[584px] w-[130px] h-[219px] bg-[#f5f4f2] border border-[#c6c0b8] border-b-0 flex flex-col pt-[3px]">
    {M2.map((t, i) => (
      <div key={i} className={`h-[27px] pb-[2px] shrink-0 flex items-center pl-[22px] whitespace-nowrap ${t === 'In 0' ? '-mx-px pl-[23px] bg-[linear-gradient(180deg,#f98a5c,#e86b3b)] border-y border-[#e35d2c]' : ''}`}>
        <span className={`${i < 4 ? 'relative z-[1]' : ''} ${t === 'In 0' ? 'text-[#fdeee6]' : 'text-[#4a4845]'}`}>{t}</span>
      </div>
    ))}
    <div className="absolute left-[13px] top-[2px] w-[110px] h-[107px] bg-[#ffb25e]" />
  </div>
);

const Overlay = () => {
  const pur = 'rgba(209,152,255,0.5)';
  const L = 'rgba(232,78,28,0.85)';
  const seg = [
    [696, 821, 804, 769], [804, 769, 1418, 769], [1418, 769, 1418, 810],
    [424, 820, 619, 939], [619, 939, 1396, 939], [1396, 939, 1396, 838],
  ];
  return (
    <svg className="absolute left-0 top-0 pointer-events-none" width="1827" height="1171" viewBox="0 0 1827 1171">
      {seg.map((s, i) => <line key={i} x1={s[0]} y1={s[1]} x2={s[2]} y2={s[3]} stroke={pur} strokeWidth="18" strokeLinecap="round" />)}
      <line x1="1244" y1="555" x2="790" y2="634" stroke="rgba(255,178,94,0.75)" strokeWidth="19" />
      <line x1="879" y1="815" x2="285" y2="919" stroke="rgba(93,216,255,0.7)" strokeWidth="21" />
      <line x1="384" y1="708" x2="301" y2="614" stroke="rgba(205,255,90,0.6)" strokeWidth="21" strokeLinecap="round" />
      <path d="M1244 554 L782 634 M796 624 L782 634 L798 638" fill="none" stroke={L} strokeWidth="3" />
      <path d="M879 817 L285 919 M302 912 L285 919 L302 927" fill="none" stroke={L} strokeWidth="3" />
      <path d="M382 707 L292 613 M312 620 L292 613 L297 632" fill="none" stroke={L} strokeWidth="3" />
      <rect x="1616.5" y="68.5" width="200" height="199" fill="none" stroke="rgba(225,30,30,0.72)" strokeWidth="3" />
      <line x1="1806" y1="169" x2="1825" y2="169" stroke="rgba(225,30,30,0.6)" strokeWidth="2" />
      <polygon points="1809,65 1816,69 1809,73" fill="#e04030" />
      <polygon points="1823,65 1816,69 1823,73" fill="#6a9a5a" />
    </svg>
  );
};

export default function App() {
  return (
    <div className="relative w-[1827px] h-[1171px] overflow-hidden bg-black font-['Noto_Sans','Open_Sans',sans-serif] text-[14.67px]">
      <ImageWin />
      <Gxsm />
      <Phase />
      <SrDsp />
      <VWin />
      <UserTabs />
      <Channel />
      <Menu1 />
      <Menu2 />
      <div className="absolute left-[1791px] top-[1167px] w-[36px] h-[4px] bg-[#f5f4f2]" />
      <Overlay />
    </div>
  );
}
